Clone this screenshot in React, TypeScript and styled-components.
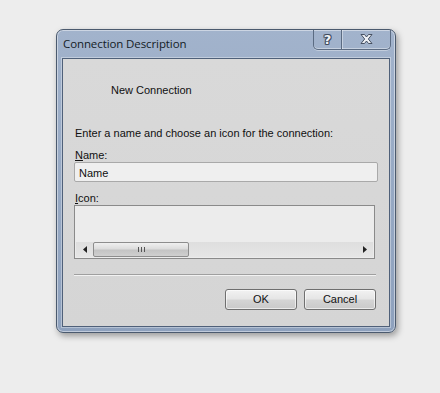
import React from "react";
import styled, { createGlobalStyle } from "styled-components";

const Global = createGlobalStyle`
  html, body { margin: 0; padding: 0; background: #ededed; }
  body { width: 440px; height: 393px; overflow: hidden; font-family: "Liberation Sans", Arial, sans-serif; }
`;

const Page = styled.div`
  padding: 29px 0 0 56px;
`;

const Window = styled.div`
  width: 340px;
  height: 304px;
  box-sizing: border-box;
  border: 1px solid #4b5a6e;
  border-radius: 7px;
  background: linear-gradient(180deg, #a2b3cc 0%, #99abc5 40%, #8ea1bd 100%);
  box-shadow: 2px 3px 6px rgba(0, 0, 0, 0.35), inset 0 0 0 1px rgba(255, 255, 255, 0.45);
  display: flex;
  flex-direction: column;
  padding: 0 5px 5px 5px;
`;

const TitleBar = styled.div`
  height: 28px;
  display: flex;
  align-items: flex-start;
  justify-content: space-between;
`;

const Title = styled.div`
  font-family: "Open Sans", "Noto Sans", sans-serif;
  font-size: 11.5px;
  color: #141c26;
  margin: 6px 0 0 1px;
  letter-spacing: -0.1px;
`;

const CaptionGroup = styled.div`
  display: flex;
  height: 19px;
  border: 1px solid #5b6b82;
  border-top: none;
  border-radius: 0 0 5px 5px;
  box-shadow: inset 0 -1px 0 rgba(255, 255, 255, 0.4), 0 1px 0 rgba(255, 255, 255, 0.35);
  margin-right: -1px;
  overflow: hidden;
`;

const CaptionButton = styled.div<{ $w: number; $divider?: boolean }>`
  width: ${(p) => p.$w}px;
  display: flex;
  align-items: center;
  justify-content: center;
  border-right: ${(p) => (p.$divider ? "1px solid #5b6b82" : "none")};
  box-shadow: ${(p) => (p.$divider ? "1px 0 0 rgba(255,255,255,0.4)" : "none")};
  font-family: "DejaVu Sans", sans-serif;
  font-weight: bold;
  font-size: 13px;
  line-height: 13px;
  color: #f2f4f8;
  text-shadow: 1px 0 0 #3f4a5c, -1px 0 0 #3f4a5c, 0 1px 0 #3f4a5c, 0 -1px 0 #3f4a5c,
    1px 1px 0 #56627a, -1px -1px 0 #56627a, 1px -1px 0 #56627a, -1px 1px 0 #56627a;
  padding-bottom: 1px;
`;

const Client = styled.div`
  flex: 1;
  border: 1px solid #4f6079;
  box-shadow: 0 0 0 1px rgba(255, 255, 255, 0.35);
  background: linear-gradient(180deg, #d9d9d9 0%, #d5d5d5 100%);
  padding: 0 13px 0 11px;
  display: flex;
  flex-direction: column;
  font-size: 11px;
  line-height: 17px;
  color: #101010;
`;

const Header = styled.div`
  margin: 23px 0 0 37px;
  height: 14px;
`;

const Text = styled.div`
  margin-top: 29px;
  height: 14px;
  padding-left: 1px;
`;

const Label = styled.div`
  margin-top: 8px;
  height: 14px;
  padding-left: 1px;
  u { text-decoration: underline; text-underline-offset: 1px; }
`;

const TextBox = styled.div`
  margin-top: 1px;
  height: 20px;
  box-sizing: border-box;
  border: 1px solid #a9a9a9;
  border-radius: 2px;
  background: #efefef;
  width: 304px;
  padding: 3px 0 0 4px;
  line-height: 14px;
`;

const ListBox = styled.div`
  margin-top: 1px;
  width: 301px;
  height: 54px;
  box-sizing: border-box;
  border: 1px solid #8a8a8a;
  background: #ececec;
  display: flex;
  flex-direction: column;
  justify-content: flex-end;
  padding: 0 1px 1px 1px;
`;

const ScrollBar = styled.div`
  height: 15px;
  background: linear-gradient(180deg, #dedede 0%, #e6e6e6 100%);
  display: flex;
  align-items: stretch;
`;

const Arrow = styled.div`
  width: 17px;
  display: flex;
  align-items: center;
  justify-content: center;
`;

const Track = styled.div`
  flex: 1;
  display: flex;
  align-items: stretch;
`;

const Thumb = styled.div`
  width: 96px;
  box-sizing: border-box;
  border: 1px solid #8d8d8d;
  border-radius: 2px;
  background: linear-gradient(180deg, #f0f0f0 0%, #dcdcdc 45%, #c4c4c4 55%, #cfcfcf 100%);
  display: flex;
  align-items: center;
  justify-content: center;
`;

const Grip = styled.div`
  display: flex;
  gap: 2px;
  height: 5px;
  span {
    width: 1px;
    background: #555;
  }
`;

const Separator = styled.div`
  margin-top: 15px;
  width: 302px;
  height: 1px;
  background: #9f9f9f;
  box-shadow: 0 1px 0 #f2f2f2;
`;

const ButtonRow = styled.div`
  margin-top: 14px;
  width: 302px;
  display: flex;
  justify-content: flex-end;
  gap: 7px;
`;

const Button = styled.div`
  width: 72px;
  height: 21px;
  box-sizing: border-box;
  border: 1px solid #6f6f6f;
  border-radius: 3px;
  background: linear-gradient(180deg, #f2f2f2 0%, #e6e6e6 45%, #d4d4d4 55%, #c9c9c9 100%);
  box-shadow: inset 0 0 0 1px rgba(255, 255, 255, 0.6);
  display: flex;
  align-items: center;
  justify-content: center;
  font-size: 11px;
  line-height: 13px;
  color: #111;
`;

export default function App() {
  return (
    <>
      <Global />
      <Page>
        <Window>
          <TitleBar>
            <Title>Connection Description</Title>
            <CaptionGroup>
              <CaptionButton $w={27} $divider>?</CaptionButton>
              <CaptionButton $w={48}>
                <svg width="13" height="10" viewBox="0 0 13 10">
                  <path
                    d="M1 0.5 H4.5 L6.5 3 L8.5 0.5 H12 L8.3 5 L12 9.5 H8.5 L6.5 7 L4.5 9.5 H1 L4.7 5 Z"
                    fill="#eef1f6"
                    stroke="#3a4456"
                    strokeWidth="0.9"
                    strokeLinejoin="round"
                  />
                </svg>
              </CaptionButton>
            </CaptionGroup>
          </TitleBar>
          <Client>
            <Header>New Connection</Header>
            <Text>Enter a name and choose an icon for the connection:</Text>
            <Label>
              <u>N</u>ame:
            </Label>
            <TextBox>Name</TextBox>
            <Label>
              <u>I</u>con:
            </Label>
            <ListBox>
              <ScrollBar>
                <Arrow>
                  <svg width="4" height="7" viewBox="0 0 4 7">
                    <path d="M4 0 L0 3.5 L4 7 Z" fill="#222" />
                  </svg>
                </Arrow>
                <Track>
                  <Thumb>
                    <Grip>
                      <span />
                      <span />
                      <span />
                    </Grip>
                  </Thumb>
                </Track>
                <Arrow>
                  <svg width="4" height="7" viewBox="0 0 4 7">
                    <path d="M0 0 L4 3.5 L0 7 Z" fill="#222" />
                  </svg>
                </Arrow>
              </ScrollBar>
            </ListBox>
            <Separator />
            <ButtonRow>
              <Button>OK</Button>
              <Button>Cancel</Button>
            </ButtonRow>
          </Client>
        </Window>
      </Page>
    </>
  );
}
